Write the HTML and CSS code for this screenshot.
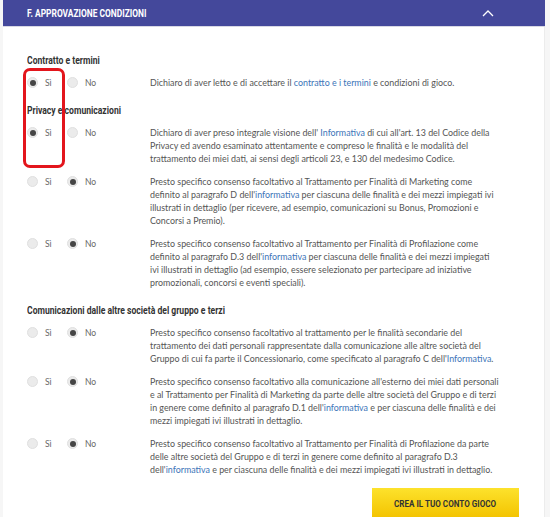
FILE: index.html
```html
<!DOCTYPE html>
<html lang="it">
  <head>
    <meta charset="UTF-8" />
    <meta name="viewport" content="width=device-width, initial-scale=1.0" />
    <title>Approvazione condizioni</title>
    <link rel="stylesheet" href="styles.css">
  </head>
  <body>
    <div class="panel">
      <div class="panel-head">
        <span class="panel-title">F. APPROVAZIONE CONDIZIONI</span>
        <svg class="chevron" width="12" height="8" viewBox="0 0 12 8">
          <path d="M1 7 L6 2 L11 7" fill="none" stroke="#fff" stroke-width="1.3" />
        </svg>
      </div>
      <div class="panel-body">
        <h3 class="group-title"><span>Contratto e termini</span></h3>
        <div class="consent">
          <div class="choice">
            <label class="radio"><span class="dot checked"></span>Sì</label>
            <label class="radio"><span class="dot"></span>No</label>
          </div>
          <p class="consent-text">Dichiaro di aver letto e di accettare il <a href="#">contratto e i termini</a> e condizioni di gioco.</p>
        </div>

        <h3 class="group-title"><span>Privacy e comunicazioni</span></h3>
        <div class="consent">
          <div class="choice">
            <label class="radio"><span class="dot checked"></span>Sì</label>
            <label class="radio"><span class="dot"></span>No</label>
          </div>
          <p class="consent-text">Dichiaro di aver preso integrale visione dell' <a href="#">Informativa</a> di cui all'art. 13 del Codice della<br>Privacy ed avendo esaminato attentamente e compreso le finalità e le modalità del<br>trattamento dei miei dati, ai sensi degli articoli 23, e 130 del medesimo Codice.</p>
        </div>
        <div class="consent">
          <div class="choice">
            <label class="radio"><span class="dot"></span>Sì</label>
            <label class="radio"><span class="dot checked"></span>No</label>
          </div>
          <p class="consent-text">Presto specifico consenso facoltativo al Trattamento per Finalità di Marketing come<br>definito al paragrafo D dell'<a href="#">informativa</a> per ciascuna delle finalità e dei mezzi impiegati ivi<br>illustrati in dettaglio (per ricevere, ad esempio, comunicazioni su Bonus, Promozioni e<br>Concorsi a Premio).</p>
        </div>
        <div class="consent">
          <div class="choice">
            <label class="radio"><span class="dot"></span>Sì</label>
            <label class="radio"><span class="dot checked"></span>No</label>
          </div>
          <p class="consent-text">Presto specifico consenso facoltativo al Trattamento per Finalità di Profilazione come<br>definito al paragrafo D.3 dell'<a href="#">informativa</a> per ciascuna delle finalità e dei mezzi impiegati<br>ivi illustrati in dettaglio (ad esempio, essere selezionato per partecipare ad iniziative<br>promozionali, concorsi e eventi speciali).</p>
        </div>

        <h3 class="group-title"><span>Comunicazioni dalle altre società del gruppo e terzi</span></h3>
        <div class="consent">
          <div class="choice">
            <label class="radio"><span class="dot"></span>Sì</label>
            <label class="radio"><span class="dot checked"></span>No</label>
          </div>
          <p class="consent-text">Presto specifico consenso facoltativo al trattamento per le finalità secondarie del<br>trattamento dei dati personali rappresentate dalla comunicazione alle altre società del<br>Gruppo di cui fa parte il Concessionario, come specificato al paragrafo C dell'<a href="#">Informativa</a>.</p>
        </div>
        <div class="consent">
          <div class="choice">
            <label class="radio"><span class="dot"></span>Sì</label>
            <label class="radio"><span class="dot checked"></span>No</label>
          </div>
          <p class="consent-text">Presto specifico consenso facoltativo alla comunicazione all'esterno dei miei dati personali<br>e al Trattamento per Finalità di Marketing da parte delle altre società del Gruppo e di terzi<br>in genere come definito al paragrafo D.1 dell'<a href="#">informativa</a> e per ciascuna delle finalità e dei<br>mezzi impiegati ivi illustrati in dettaglio.</p>
        </div>
        <div class="consent">
          <div class="choice">
            <label class="radio"><span class="dot"></span>Sì</label>
            <label class="radio"><span class="dot checked"></span>No</label>
          </div>
          <p class="consent-text">Presto specifico consenso facoltativo al Trattamento per Finalità di Profilazione da parte<br>delle altre società del Gruppo e di terzi in genere come definito al paragrafo D.3<br>dell'<a href="#">informativa</a> e per ciascuna delle finalità e dei mezzi impiegati ivi illustrati in dettaglio.</p>
        </div>

        <div class="actions">
          <button class="btn-create"><span>CREA IL TUO CONTO GIOCO</span></button>
        </div>
      </div>
      <!-- evidenziazione -->
      <div class="highlight"></div>
    </div>
  </body>
</html>
```

FILE: styles.css
```css
* {
  box-sizing: border-box;
}
body {
  margin: 0;
  background-color: #f6f6f6;
  font-family: Lato, "Open Sans", sans-serif;
  color: #555;
}
.panel {
  position: relative;
  width: 542px;
  margin-left: 3px;
  background-color: #fff;
}
.panel-head {
  display: flex;
  align-items: center;
  justify-content: space-between;
  height: 27px;
  padding: 0 51px 0 24px;
  background-color: #44489b;
  border-bottom: 1px solid #d8d8e4;
}
.panel-title {
  display: inline-block;
  font-family: Roboto, sans-serif;
  font-weight: 700;
  font-size: 10px;
  color: #fff;
  transform: scaleX(0.84);
  transform-origin: left center;
}
.chevron {
  display: block;
}
.panel-body {
  padding: 26px 25px 0 24px;
  border-right: 1px solid #ececec;
}
.group-title {
  margin: 14px 0 7px;
  font-family: Roboto, sans-serif;
  font-weight: 700;
  font-size: 10px;
  line-height: 16px;
  color: #333;
}
.group-title:first-child {
  margin-top: 0;
}
.group-title span {
  display: inline-block;
  transform: scaleX(0.86);
  transform-origin: left center;
}
.consent {
  display: flex;
  margin-bottom: 10px;
}
.choice {
  display: flex;
  width: 123px;
  flex-shrink: 0;
  height: 13px;
  align-items: center;
}
.radio {
  display: flex;
  align-items: center;
  width: 40px;
  font-size: 8.5px;
  color: #666;
}
.dot {
  display: flex;
  align-items: center;
  justify-content: center;
  width: 11px;
  height: 11px;
  margin-right: 7px;
  border-radius: 50%;
  background-color: #ebebeb;
  border: 1px solid #e0e0e0;
}
.dot.checked::after {
  content: "";
  width: 6px;
  height: 6px;
  border-radius: 50%;
  background-color: #454545;
}
.consent-text {
  margin: 0;
  font-size: 8.9px;
  line-height: 13px;
  white-space: nowrap;
}
.consent-text a {
  color: #3b74b8;
  text-decoration: none;
}
.actions {
  display: flex;
  justify-content: flex-end;
  padding-top: 2px;
}
.btn-create {
  width: 147px;
  height: 30px;
  border: none;
  background: linear-gradient(#fde22c, #f3c300);
  font-family: Roboto, sans-serif;
  font-weight: 700;
  font-size: 9.5px;
  color: #333;
  cursor: pointer;
}
.btn-create span {
  display: inline-block;
  transform: scaleX(0.85);
}
.highlight {
  position: absolute;
  left: 20px;
  top: 68px;
  width: 42px;
  height: 100px;
  border: 3px solid #e3151c;
  border-radius: 7px;
}
```
